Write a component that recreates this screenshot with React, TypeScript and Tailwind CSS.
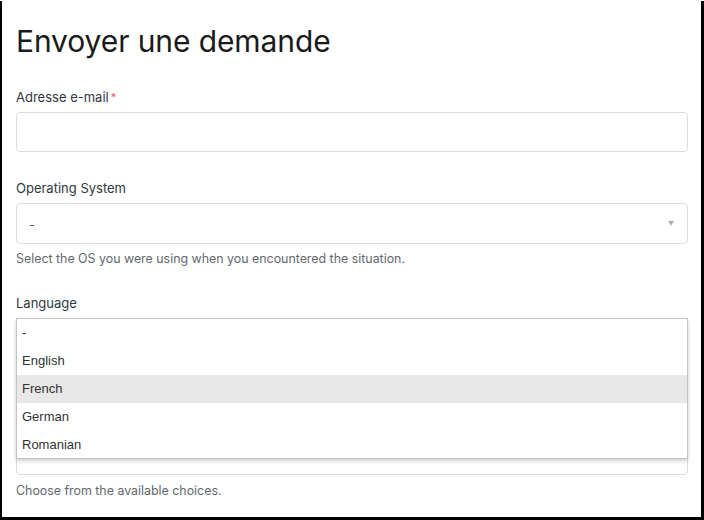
import React from 'react';

const sans = "font-['Inter','Noto_Sans',sans-serif]";

const languages = ['-', 'English', 'French', 'German', 'Romanian'];

function Label({ children, required }: { children: React.ReactNode; required?: boolean }) {
  return (
    <label className="block text-[13px] text-[#2f3941] leading-[18px] mb-[6px]">
      {children}
      {required && <span className="text-[#e35b66] ml-[2px] text-[11px] align-top">*</span>}
    </label>
  );
}

export default function App() {
  return (
    <div className={`w-[704px] h-[520px] bg-black ${sans}`}>
      <div className="w-[699px] h-[516px] ml-[2px] mt-px bg-white px-[14px] pt-[24px] overflow-hidden">
        <h1 className="text-[30px] leading-[32px] text-[#1a1a1a] font-normal tracking-[-0.1px]">
          Envoyer une demande
        </h1>

        <div className="mt-[31px]">
          <Label required>Adresse e-mail</Label>
          <div className="h-[40px] w-[672px] rounded-[4px] border border-[#dcdcdc] bg-white" />
        </div>

        <div className="mt-[27px]">
          <Label>Operating System</Label>
          <div className="h-[41px] w-[672px] rounded-[4px] border border-[#dcdcdc] bg-white flex items-center justify-between pl-[12px] pr-[13px]">
            <span className="text-[13px] text-[#555] mt-[4px]">-</span>
            <span className="text-[6px] text-[#aaa]">▼</span>
          </div>
          <p className="mt-[7px] text-[12.4px] text-[#5f6870] leading-[16px]">
            Select the OS you were using when you encountered the situation.
          </p>
        </div>

        <div className="mt-[27px]">
          <Label>Language</Label>
          <div className="relative">
            <div className="h-[157px] w-[672px] rounded-[4px] border border-[#dcdcdc] bg-white" />
            <ul className="absolute left-0 top-0 w-[672px] h-[141px] border border-[#c4c4c4] bg-white shadow-[0_2px_4px_rgba(0,0,0,0.18)] font-['Liberation_Sans',Arial,sans-serif] text-[13px] text-[#333]">
              {languages.map((lang, i) => (
                <li
                  key={lang}
                  className={`h-[28px] pl-[5px] flex items-center ${i === 0 ? 'h-[27px]' : ''} ${
                    lang === 'French' ? 'bg-[#e8e8e8]' : ''
                  }`}
                >
                  {lang}
                </li>
              ))}
            </ul>
          </div>
          <p className="mt-[8px] text-[12.4px] text-[#5f6870] leading-[16px]">
            Choose from the available choices.
          </p>
        </div>
      </div>
    </div>
  );
}
